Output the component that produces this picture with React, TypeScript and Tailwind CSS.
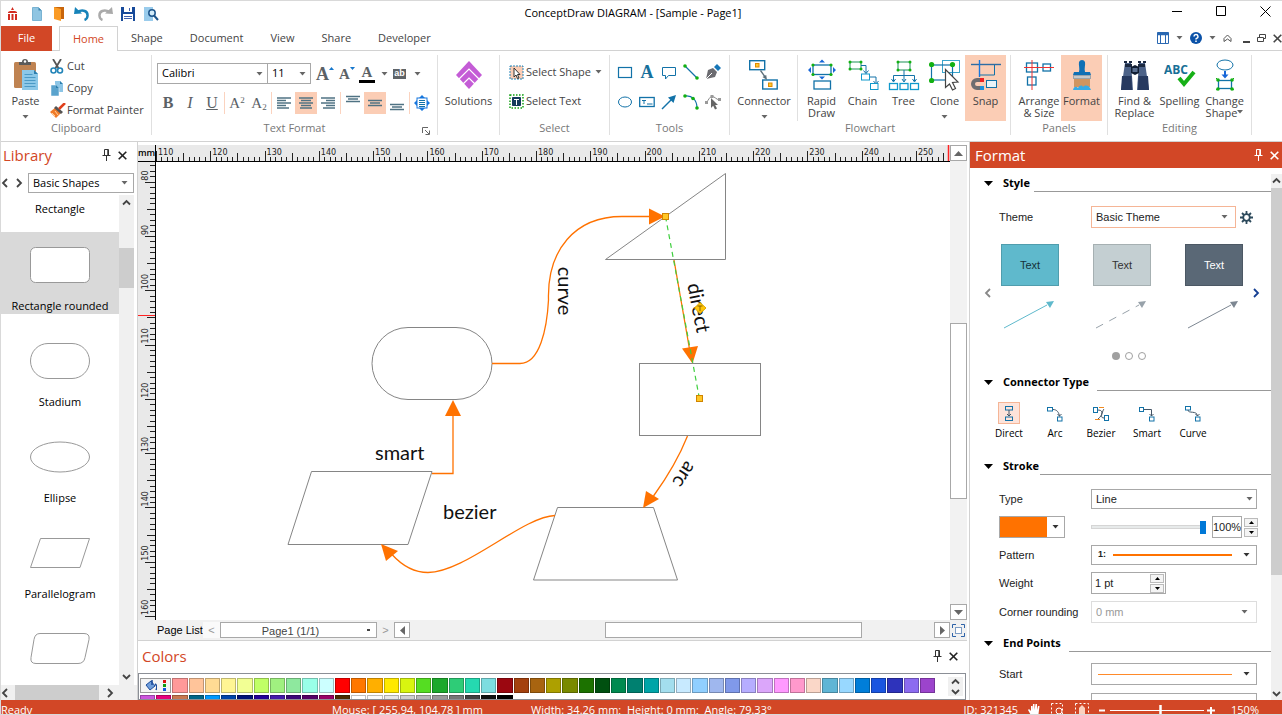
import type { ReactNode } from "react";

const ORANGE = "#ff7200";
const BLUE = "#1272a8";

const TOP_COLORS = [
  "#ff9999", "#ffc49a", "#ffdb94", "#fff594", "#f2ff94", "#c0ff66", "#a0f080", "#8ee89e", "#99ffe8", "#ccffff",
  "#ff0000", "#ff7700", "#ffaf00", "#ffe900", "#d8f510", "#55dd22", "#1ca82c", "#2ecc77", "#25d9b0", "#7ddde0",
  "#9b0710", "#a4410e", "#a86410", "#ada000", "#798a00", "#1c7200", "#005010", "#008a50", "#008070", "#00a5a8",
  "#a3deee", "#c8eaff", "#90cfff", "#9fb7ee", "#8099ea", "#b6adff", "#dba6fa", "#ff99ff", "#ff99cc", "#fad7c8",
  "#5fb5d5", "#98d8ff", "#007ed9", "#1a55e0", "#2e33bb", "#8c6bf0", "#9c44cc",
];

const BOTTOM_COLORS = [
  "#cc55dd", "#e6007e", "#c87850", "#006688", "#0099ff", "#0044aa", "#001177", "#220099", "#441aaa", "#3c0878",
  "#550066", "#990066", "#4a2a00", "#ffffff", "#fafafa", "#e6e6e6", "#cfcfcf", "#b8b8b8", "#999999", "#777777",
  "#404040", "#101010", "#000000",
];

function Caret({ className = "text-[#666]" }: { className?: string }) {
  return (
    <svg viewBox="0 0 7 4" className={`h-1 w-[7px] shrink-0 ${className}`} fill="currentColor">
      <path d="M.500 0h6L3.500 3.500z" />
    </svg>
  );
}

function Chevron({ dir, className = "text-[#444]" }: { dir: "left" | "right" | "up" | "down"; className?: string }) {
  const d = { left: "M6 1 2 5l4 4", right: "M3 1l4 4-4 4", up: "M1 6.500 4.500 3 8 6.500", down: "M1 3l3.500 3.500L8 3" }[dir];
  return (
    <svg viewBox="0 0 9 10" className={`h-[10px] w-[9px] shrink-0 ${className}`} fill="none" stroke="currentColor" strokeWidth="1.800">
      <path d={d} />
    </svg>
  );
}

function Pin() {
  return (
    <svg viewBox="0 0 9 12" className="h-3 w-[9px]" fill="none" stroke="currentColor">
      <path d="M2.500 6.500v-6h4v6M.500 6.500h8M4.500 7v5" />
      <path d="M6 1v5" strokeWidth="1.500" />
    </svg>
  );
}

function Cross() {
  return (
    <svg viewBox="0 0 9 9" className="h-[9px] w-[9px]" stroke="currentColor" strokeWidth="1.600">
      <path d="M.700.700l7.600 7.600M8.300.700.700 8.300" />
    </svg>
  );
}

function Drop({ label, value, className, arrow = "right-2" }: { label: string; value: string; className: string; arrow?: string }) {
  return (
    <div className={`relative flex items-center border bg-white ${className}`}>
      <select aria-label={label} className="h-full w-full appearance-none truncate bg-transparent pl-1 outline-none">
        <option>{value}</option>
      </select>
      <span className={`pointer-events-none absolute ${arrow}`}>
        <Caret />
      </span>
    </div>
  );
}

/* ---------- ribbon ---------- */

function Group({ label, className, children }: { label: string; className: string; children: ReactNode }) {
  return (
    <div className={`flex shrink-0 flex-col border-r border-[#e0e0e0] ${className}`}>
      <div className="flex h-[66px]">{children}</div>
      <div className="mt-px text-center leading-3 text-[#777]">{label}</div>
    </div>
  );
}

function Big({ label, icon, active, caret, width = "w-[41px]" }: { label: ReactNode; icon: ReactNode; active?: boolean; caret?: boolean; width?: string }) {
  return (
    <button className={`flex h-full shrink-0 flex-col items-center ${width} ${active ? "bg-[#fbcdb5]" : ""}`}>
      <span className="flex h-10 items-center">{icon}</span>
      <span className="text-center leading-3 whitespace-pre">{label}</span>
      {caret && (
        <span className="mt-2">
          <Caret />
        </span>
      )}
    </button>
  );
}

function Tool({ name, active, children }: { name: string; active?: boolean; children: ReactNode }) {
  return (
    <button aria-label={name} className={`flex h-[22px] w-[22px] shrink-0 items-center justify-center ${active ? "bg-[#fbcdb5]" : ""}`}>
      {children}
    </button>
  );
}

const ToolSep = () => <span className="mx-px h-[22px] w-px bg-[#fbd3bf]" />;

function Svg({ w, h, children }: { w: number; h: number; children: ReactNode }) {
  return (
    <svg width={w} height={h} viewBox={`0 0 ${w} ${h}`} fill="none" stroke={BLUE}>
      {children}
    </svg>
  );
}

function Lines({ rows }: { rows: [number, number, number][] }) {
  return (
    <svg width="14" height="20" viewBox="0 0 14 20" stroke="#4f7283" strokeWidth="1.500">
      {rows.map(([x1, x2, y]) => (
        <path key={y} d={`M${x1} ${y}H${x2}`} />
      ))}
    </svg>
  );
}

function Dots({ points, r = 1.6 }: { points: [number, number][]; r?: number }) {
  return (
    <g fill="#12b012" stroke="none">
      {points.map(([x, y]) => (
        <circle key={`${x}-${y}`} cx={x} cy={y} r={r} />
      ))}
    </g>
  );
}

const PasteIcon = () => (
  <Svg w={26} h={32}>
    <g stroke="none">
      <rect x="1" y="3" width="22" height="26" rx="1.500" fill="#bf8352" />
      <path d="M6 6V3h3a3 3 0 0 1 6 0h3v3z" fill="#5b5b5b" />
      <circle cx="12" cy="2.500" r="1.200" fill="#fff" />
      <path d="M9 11h12l4 4v16H9z" fill="#8cc8e8" />
      <path d="M21 11v4h4z" fill="#2c7fae" />
    </g>
    <path d="M11.500 15.500h8M11.500 18.500h11M11.500 21.500h11M11.500 24.500h11M11.500 27.500h11" stroke="#4b9ac6" />
  </Svg>
);

const ConnectorIcon = () => (
  <Svg w={30} h={32}>
    <rect x=".700" y="1.700" width="15" height="9" strokeWidth="1.400" />
    <rect x="13.700" y="21" width="14.500" height="9" strokeWidth="1.400" />
    <g fill="#ffc72e" stroke="#e08a00">
      <rect x="6.500" y="4.500" width="3.500" height="3.500" />
      <rect x="19.500" y="24" width="3.500" height="3.500" />
    </g>
    <path d="M11.500 11.500l5 7" stroke="#5c6f7a" strokeWidth="1.300" />
    <path d="M18 21l-4.500-3 3.700-2z" fill="#5c6f7a" stroke="none" />
  </Svg>
);

const RapidIcon = () => (
  <Svg w={28} h={32}>
    <rect x="5" y="6" width="18" height="9.500" strokeWidth="1.300" />
    <rect x="6" y="22" width="16.500" height="8" strokeWidth="1.300" />
    <path d="M14 .500l3 3h-6zM14 20.500l3-3h-6zM0 11l3-3v6zM28 11l-3-3v6z" fill="#1666d8" stroke="none" />
    <Dots points={[[5, 6], [23, 6], [5, 15.5], [23, 15.5]]} />
  </Svg>
);

const ChainIcon = () => (
  <Svg w={32} h={32}>
    <rect x="3" y="3" width="11" height="7" stroke="#1c9158" />
    <path d="M14 6.500h5v8M23 18h6v6" />
    <path d="M16.500 11.500l2.500 3 2.500-3M26.500 22l2.500 3 2.500-3" />
    <rect x="14.500" y="15" width="8" height="6" stroke="#1099cc" />
    <rect x="23.500" y="24.500" width="7.500" height="6" stroke="#1099cc" />
    <Dots points={[[3, 3], [14, 3], [3, 10], [14, 10]]} r={1.5} />
  </Svg>
);

const TreeIcon = () => (
  <Svg w={32} h={32}>
    <rect x="10" y="3" width="12" height="8" stroke="#1c9158" />
    <path d="M16 11v11M5.500 22v-5.500h21V22M3.500 20l2 3 2-3M14 20l2 3 2-3M24.500 20l2 3 2-3" />
    <g stroke="#1099cc" strokeWidth="1.300">
      <rect x="1.500" y="24.500" width="8" height="6" />
      <rect x="12" y="24.500" width="8" height="6" />
      <rect x="22.500" y="24.500" width="8" height="6" />
    </g>
    <Dots points={[[10, 3], [22, 3], [10, 11], [22, 11]]} r={1.5} />
  </Svg>
);

const CloneIcon = () => (
  <Svg w={32} h={32}>
    <rect x="13.500" y="1.500" width="17" height="12" stroke="#3aa5cc" />
    <rect x="2.500" y="6" width="21" height="15" strokeWidth="1.200" />
    <Dots points={[[2.6, 5.5], [23.5, 5.5], [2.6, 21.5]]} r={2.6} />
    <path d="M16.500 10.500v18l4-3.500 3 6 3-1.500-3-6 5.500-.500z" fill="#fff" stroke="#444" strokeWidth="1.200" />
  </Svg>
);

const SnapIcon = () => (
  <Svg w={32} h={32}>
    <path d="M1 5.500h30" stroke="#2d6ca3" strokeWidth="1.400" />
    <path d="M9.500 1v17" stroke="#1677dd" strokeWidth="1.400" />
    <path d="M24.500 6v10H10" />
    <path d="M10 21H7a4 4 0 0 0 0 8h3" stroke="#6d6d70" strokeWidth="4" />
    <path d="M10 19h4v4h-4z" fill="#e22" stroke="none" />
    <path d="M10 27h4v4h-4z" fill="#1a90dd" stroke="none" />
    <rect x="16.500" y="21.500" width="10" height="7" fill="#e8f3f8" />
  </Svg>
);

const ArrangeIcon = () => (
  <Svg w={32} h={32}>
    <rect x="3.500" y="4" width="11" height="9" strokeWidth="1.300" />
    <rect x="20" y="5" width="7.500" height="7" strokeWidth="1.300" />
    <rect x="4.500" y="18" width="8.500" height="8" strokeWidth="1.300" />
    <path d="M1 8.500h30M9 1v30" stroke="#e33" />
  </Svg>
);

const BrushIcon = () => (
  <Svg w={20} h={32}>
    <g stroke="none">
      <path d="M7 3a3.200 3.200 0 0 1 6 0c.600 3-1 6 0 10h5l1 3H1l1-3h5c1-4-.600-7 0-10z" fill="#0f70b5" />
      <path d="M1 16h18v4H1z" fill="#9aa3aa" />
      <path d="M2 17.500h16v1H2z" fill="#eee" />
      <path d="M2 20h16v8H2z" fill="#cf9560" />
      <path d="M1 31c1-4 3-4 5-2 2-3 4-3 5-1 2-2 5-2 7 1l1 2z" fill="#35abe8" />
    </g>
  </Svg>
);

const BinocularsIcon = () => (
  <Svg w={30} h={32}>
    <g stroke="none">
      <path d="M5 4h6l2 27H1z" fill="#4c6288" />
      <path d="M25 4h-6l-2 27h12z" fill="#4c6288" />
      <path d="M2 17h9.500l.500 14H1zM18.500 17H28l1 14H18z" fill="#26395f" />
      <path d="M4 2h3v2H4zM9 2h3v2H9zM18 2h3v2h-3zM23 2h3v2h-3zM5 5h7v3H5zM18 5h7v3h-7z" fill="#1c2940" />
      <path d="M11 8l4-2 4 2v6l-4 2-4-2z" fill="#111e33" />
      <rect x="12.500" y="9" width="5" height="4" fill="#5a6f90" />
    </g>
  </Svg>
);

const SpellingIcon = () => (
  <svg width="32" height="32" viewBox="0 0 32 32">
    <text x="0" y="15" className="font-['Open_Sans',sans-serif] text-[12px] font-bold" fill="#176f96">ABC</text>
    <path d="M15 19l5 6L30 13" fill="none" stroke="#17b017" strokeWidth="4" />
  </svg>
);

const ChangeIcon = () => (
  <Svg w={20} h={32}>
    <ellipse cx="10" cy="6" rx="8" ry="5" />
    <path d="M10 12v4" stroke="#1666d8" strokeWidth="2" />
    <path d="M6.500 15.500h7L10 19.500z" fill="#1666d8" stroke="none" />
    <rect x="3.500" y="21.500" width="13" height="8" strokeWidth="1.300" />
    <path d="M1 19l3 3M19 19l-3 3M1 31l3-2M19 31l-3-2" stroke="#12b012" />
    <Dots points={[[3, 21], [17, 21], [3, 30], [17, 30]]} r={1.8} />
  </Svg>
);

function TitleBar() {
  return (
    <header className="grid h-[25px] shrink-0 grid-cols-3 items-center pr-2 pl-[7px]">
      <div className="flex items-center gap-[9px]">
        <svg width="9" height="14" viewBox="0 0 9 14" fill="#d22b20">
          <path d="M4.500 0 6 3 3 3zM0 5l2-1h5l2 1v1H0zM0 7h2v6H0zM3.500 7h2v6h-2zM7 7h2v6H7z" />
        </svg>
        <button aria-label="New" className="ml-[6px]">
          <Svg w={10} h={14}>
            <path d="M.500.500h6l3 3v10h-9z" fill="#8fc5e2" stroke="#79b3d3" />
            <path d="M6.500.500v3h3z" fill="#3a85b0" stroke="none" />
          </Svg>
        </button>
        <button aria-label="Open" className="ml-[2px]">
          <Svg w={12} h={15}>
            <path d="M1 1h10v12H1z" fill="#c8650b" stroke="none" />
            <path d="M1 1l7 2v12l-7-2z" fill="#fa9b26" stroke="none" />
          </Svg>
        </button>
        <button aria-label="Undo">
          <Svg w={15} h={14}>
            <path d="M3 5c6-3 11-1 10.500 4-.200 2-1.500 3.500-3 4" stroke="#1783b9" strokeWidth="2.500" />
            <path d="M0 7L1 0l7 6.500z" fill="#1783b9" stroke="none" />
          </Svg>
        </button>
        <button aria-label="Redo">
          <Svg w={15} h={14}>
            <path d="M12 5C6 2 1 4 1.500 9c.200 2 1.500 3.500 3 4" stroke="#aaa" strokeWidth="2.500" />
            <path d="M15 7l-1-7-7 6.500z" fill="#aaa" stroke="none" />
          </Svg>
        </button>
        <button aria-label="Save" className="-ml-px">
          <Svg w={14} h={14}>
            <path d="M0 0h14v14H0z" fill="#174a9a" stroke="none" />
            <path d="M3 0h8v5H3zM2 7h10v7H2z" fill="#fff" stroke="none" />
            <path d="M8.500 1v3M3 9.500h8M3 11.500h8" stroke="#3d5fae" />
          </Svg>
        </button>
        <button aria-label="Preview">
          <Svg w={15} h={14}>
            <path d="M0 0h9v14H0z" fill="#9accec" stroke="none" />
            <circle cx="8" cy="6" r="3.200" fill="#d3ecfa" strokeWidth="1.500" stroke="#1e568c" />
            <path d="M10 8.500l4 4.500" stroke="#1e568c" strokeWidth="2" />
          </Svg>
        </button>
      </div>
      <h1 className="pr-4 text-center text-[11px] text-black">ConceptDraw DIAGRAM - [Sample - Page1]</h1>
      <div className="flex items-center justify-end gap-[33px] pr-[3px] pb-1 text-black">
        <button aria-label="Minimize">
          <svg width="11" height="11" stroke="currentColor"><path d="M0 5.500h10" /></svg>
        </button>
        <button aria-label="Maximize">
          <svg width="11" height="11" fill="none" stroke="currentColor"><path d="M.500.500h9v9h-9z" /></svg>
        </button>
        <button aria-label="Close">
          <svg width="11" height="11" stroke="currentColor"><path d="M.500.500l10 10M10.500.500l-10 10" /></svg>
        </button>
      </div>
    </header>
  );
}

function Tabs() {
  return (
    <nav className="flex h-[25px] shrink-0 items-stretch text-[11px] text-[#444]">
      <button className="w-[51px] bg-[#d24726] text-white">File</button>
      <div className="w-[7px] border-b border-[#d2d2d2]" />
      <button className="w-[59px] border-x border-t border-[#d2d2d2] text-[#d24726]">Home</button>
      <div className="flex flex-1 items-center border-b border-[#d2d2d2] pl-[13px]">
        <div className="flex gap-[27px]">
          <button>Shape</button>
          <button>Document</button>
          <button>View</button>
          <button>Share</button>
          <button>Developer</button>
        </div>
        <div className="ml-auto flex items-center gap-[7px]">
          <button aria-label="Layout">
            <Svg w={12} h={12}>
              <path d="M.500.500h11v11H.500z" fill="#fff" stroke="#2a68b2" />
              <path d="M0 2h12" strokeWidth="2.500" stroke="#2a68b2" />
              <path d="M3.500 3v9M8.500 3v9" stroke="#2a68b2" />
            </Svg>
          </button>
          <Caret />
          <button aria-label="Help">
            <svg width="12" height="12" viewBox="0 0 12 12">
              <circle cx="6" cy="6" r="6" fill="#0b52a8" />
              <path d="M4 4.500a2 2 0 1 1 2.500 2C6 6.700 6 7 6 7.500M6 8.500V10" fill="none" stroke="#fff" strokeWidth="1.500" />
            </svg>
          </button>
          <Caret />
          <button aria-label="Collapse ribbon">
            <svg width="9" height="9" fill="none" stroke="#555"><path d="M1 4.500L4.500 1 8 4.500v3L4.500 5 1 7.500z" /></svg>
          </button>
          <button aria-label="Minimize page" className="ml-1">
            <svg width="7" height="9" stroke="#444" strokeWidth="2"><path d="M0 8h7" /></svg>
          </button>
          <button aria-label="Restore page">
            <svg width="9" height="9" fill="none" stroke="#444"><path d="M2.500 3V.500h6v4H6.500M.500 3.500h6v4h-6z" /></svg>
          </button>
          <button aria-label="Close page"><Cross /></button>
        </div>
      </div>
    </nav>
  );
}

function Ribbon() {
  return (
    <div className="flex h-[91px] shrink-0 border-b border-[#d2d2d2] pt-1 pb-[6px] text-[#444]">
      <Group label="Clipboard" className="w-[151px]">
        <div className="w-1" />
        <Big label="Paste" icon={<PasteIcon />} caret />
        <div className="ml-1 flex flex-col text-[11px]">
          <button className="flex h-[22px] items-center gap-[3px]">
            <Svg w={14} h={15}>
              <path d="M3 0l6 10M11 0L5 10" stroke="#555" strokeWidth="1.800" />
              <circle cx="3.500" cy="11.500" r="2.500" strokeWidth="1.600" stroke="#2284b8" />
              <circle cx="10" cy="11.500" r="2.500" strokeWidth="1.600" stroke="#2284b8" />
            </Svg>
            Cut
          </button>
          <button className="flex h-[22px] items-center gap-[3px]">
            <Svg w={14} h={15}>
              <path d="M5 0h5l3 3v8H5z" fill="#8cc5e6" stroke="none" />
              <path d="M1 4h5l3 3v8H1z" fill="#5aa3cd" stroke="#fff" strokeWidth=".500" />
              <path d="M10 0v3h3zM6 4v3h3z" fill="#2c7fae" stroke="none" />
            </Svg>
            Copy
          </button>
          <button className="flex h-[22px] items-center gap-px whitespace-nowrap">
            <Svg w={16} h={15}>
              <path d="M0 9l6-5 6 5-6 6z" fill="#f07a28" stroke="none" />
              <path d="M4 5l2-2 7 6-2 2z" fill="#555" stroke="none" />
              <path d="M9 6l6-6" stroke="#e0401c" strokeWidth="2.500" />
              <path d="M2 10l3 3M5 8l3 4" stroke="#ffd09a" />
            </Svg>
            Format Painter
          </button>
        </div>
      </Group>

      <Group label="Text Format" className="w-[286px]">
        <div className="flex flex-col pt-2 pl-[5px]">
          <div className="flex h-[21px] items-center text-[11px] text-black">
            <Drop label="Font" value="Calibri" className="h-[21px] w-[111px] border-[#a8a8a8]" arrow="right-1" />
            <Drop label="Font size" value="11" className="h-[21px] w-[43px] border-y border-r border-l-0 border-[#a8a8a8]" arrow="right-1" />
            <div className="flex items-center pl-[3px] font-['Liberation_Serif',serif] font-bold text-[#5b6166]">
              <button className="flex w-[22px] items-start justify-center text-[18px] leading-5">
                A<svg width="5" height="3" className="mt-[3px]"><path d="M0 3h5L2.500 0z" fill="#1677cc" /></svg>
              </button>
              <button className="flex w-[22px] items-start justify-center text-[15px] leading-5">
                A<svg width="5" height="3" className="mt-[3px]"><path d="M0 0h5L2.500 3z" fill="#1677cc" /></svg>
              </button>
              <button className="ml-px flex h-[18px] w-4 justify-center border-b-[3px] border-black text-[15px] leading-[15px]">A</button>
              <span className="ml-[6px]"><Caret /></span>
              <button className="ml-[5px] h-[10px] w-[13px] bg-[#5f6468] font-['Liberation_Sans',sans-serif] text-[9px] leading-[9px] text-white">ab</button>
              <span className="ml-2"><Caret /></span>
            </div>
          </div>
          <div className="mt-2 flex font-['Liberation_Serif',serif] text-[16px] leading-none font-bold text-[#5b6166]">
            <Tool name="Bold">B</Tool>
            <Tool name="Italic"><i className="font-normal">I</i></Tool>
            <Tool name="Underline"><span className="font-normal underline">U</span></Tool>
            <ToolSep />
            <Tool name="Superscript"><span className="text-[15px] font-normal">A<sup className="text-[9px]">2</sup></span></Tool>
            <Tool name="Subscript"><span className="text-[15px] font-normal">A<sub className="text-[9px]">2</sub></span></Tool>
            <ToolSep />
            <Tool name="Align left"><Lines rows={[[0, 14, 5], [0, 9, 7.5], [0, 14, 10], [0, 9, 12.5], [0, 12, 15]]} /></Tool>
            <Tool name="Align center" active><Lines rows={[[0, 14, 5], [2, 12, 7.5], [0, 14, 10], [2, 12, 12.5], [1, 13, 15]]} /></Tool>
            <Tool name="Align right"><Lines rows={[[0, 14, 5], [5, 14, 7.5], [0, 14, 10], [5, 14, 12.5], [2, 14, 15]]} /></Tool>
            <ToolSep />
            <Tool name="Align top"><Lines rows={[[0, 14, 3.5], [2, 12, 6], [0, 14, 8.5]]} /></Tool>
            <Tool name="Align middle" active><Lines rows={[[0, 14, 7.5], [2, 12, 10], [0, 14, 12.5]]} /></Tool>
            <Tool name="Align bottom"><Lines rows={[[0, 14, 11.5], [2, 12, 14], [0, 14, 16.5]]} /></Tool>
            <ToolSep />
            <Tool name="Fit text">
              <Svg w={16} h={16}>
                <path d="M8 0l3 3H5zM8 16l3-3H5zM0 8l3-3v6zM16 8l-3-3v6z" fill="#1677dd" stroke="none" />
                <rect x="3" y="3" width="10" height="10" fill="#fff" stroke="#1677dd" />
                <path d="M5 5.500h6M5 7.500h6M5 9.500h6M5 11.500h6" />
              </Svg>
            </Tool>
          </div>
          <button aria-label="Text format options" className="mt-[13px] mr-[3px] self-end">
            <svg width="8" height="8" fill="none" stroke="#666"><path d="M.500 6V.500H6M3 3l4 4M7.500 3.500v4h-4" /></svg>
          </button>
        </div>
      </Group>

      <Group label="" className="w-[62px]">
        <Big label="Solutions" width="w-full" icon={
          <Svg w={26} h={28}>
            <path d="M13 0l13 14-13 14L0 14z" fill="#c45cd6" stroke="none" />
            <path d="M2 19l11-11 11 11M5 25l8-8 8 8" stroke="#fff" strokeWidth="1.200" />
          </Svg>
        } />
      </Group>

      <Group label="Select" className="w-[110px]">
        <div className="flex w-full flex-col gap-[7px] pt-[6px] pl-[9px] text-[11px]">
          <button className="flex h-[22px] items-center gap-[2px] whitespace-nowrap">
            <Svg w={15} h={15}>
              <path d="M1 1h13v13H1z" fill="#fbcdb5" strokeDasharray="2 1" stroke="#2284b8" />
              <path d="M5 3v9l2-2 1.500 3.500L10 13l-1.500-3.500H11z" fill="#fff" stroke="#333" />
            </Svg>
            Select Shape
            <span className="ml-[2px]"><Caret /></span>
          </button>
          <button className="flex h-[22px] items-center gap-[2px]">
            <Svg w={15} h={15}>
              <path d="M1 1h13v13H1z" strokeDasharray="1.500 1.500" stroke="#12a012" strokeWidth="1.500" />
              <path d="M3.500 3.500h8v8h-8z" fill="#143a5c" stroke="#143a5c" />
              <path d="M5 5.500h5M7.500 5v6" stroke="#fff" />
            </Svg>
            Select Text
          </button>
        </div>
      </Group>

      <Group label="Tools" className="w-[120px]">
        <div className="grid grid-cols-5 content-start gap-y-2 pt-[6px] pl-1">
          <Tool name="Rectangle"><Svg w={16} h={16}><rect x="1.500" y="3.500" width="13" height="10" strokeWidth="1.200" /></Svg></Tool>
          <Tool name="Text"><span className="font-['Liberation_Serif',serif] text-[18px] leading-none font-bold text-[#17709c]">A</span></Tool>
          <Tool name="Callout"><Svg w={16} h={16}><path d="M1.500 3.500h13v8h-7l-3 3.500v-3.500h-3z" /></Svg></Tool>
          <Tool name="Line"><Svg w={16} h={16}><path d="M2 2l12 12" strokeWidth="1.200" /><Dots points={[[2, 2], [14, 14]]} r={1.8} /></Svg></Tool>
          <Tool name="Pen">
            <Svg w={16} h={16}>
              <path d="M1 15l2-9 5-2 4 4-2 5z" fill="#6b6b70" stroke="none" />
              <path d="M9 3l3-3 4 4-3 3z" fill="#1677b8" stroke="none" />
              <path d="M1 15l6-6" stroke="#fff" />
            </Svg>
          </Tool>
          <Tool name="Ellipse"><Svg w={16} h={16}><ellipse cx="8" cy="8" rx="6.500" ry="5" /></Svg></Tool>
          <Tool name="Text box">
            <Svg w={16} h={16}><rect x=".700" y="3.500" width="14.500" height="9" strokeWidth="1.300" /><path d="M3 6.500h4M5 6v4M8 10h5.500" /></Svg>
          </Tool>
          <Tool name="Arrow"><Svg w={16} h={16}><path d="M1 15L11 5" strokeWidth="1.400" /><path d="M15 1l-2.500 8L7 3.500z" fill={BLUE} stroke="none" /></Svg></Tool>
          <Tool name="Arc"><Svg w={16} h={16}><path d="M2 2c7-1 12 4 12 12" strokeWidth="1.200" /><Dots points={[[2, 2], [10, 4.500], [14, 14]]} r={1.8} /></Svg></Tool>
          <Tool name="Edit points">
            <Svg w={16} h={16}>
              <path d="M1.500 8C4 6 4 3 7 2.500c3 0 4 3 7.500 3.500" stroke="#888" />
              <path d="M0 7h3v3H0zM5.500 1h3v3h-3zM13 4h3v3h-3z" fill="#999" stroke="none" />
              <path d="M6 4v10l2.200-2.200L10 15.500l2-1-1.800-3.500H13z" fill="#666" stroke="none" />
            </Svg>
          </Tool>
        </div>
      </Group>

      <Group label="Flowchart" className="w-[281px]">
        <div className="w-px" />
        <Big label="Connector" icon={<ConnectorIcon />} caret width="w-[66px]" />
        <div className="mr-[3px] w-px bg-[#e0e0e0]" />
        <Big label={"Rapid\nDraw"} icon={<RapidIcon />} />
        <Big label="Chain" icon={<ChainIcon />} />
        <Big label="Tree" icon={<TreeIcon />} />
        <Big label="Clone" icon={<CloneIcon />} caret />
        <Big label="Snap" icon={<SnapIcon />} active />
      </Group>

      <Group label="Panels" className="w-[97px]">
        <div className="w-[6px]" />
        <Big label={"Arrange\n& Size"} icon={<ArrangeIcon />} width="w-[44px]" />
        <Big label="Format" icon={<BrushIcon />} active />
      </Group>

      <Group label="Editing" className="w-[144px]">
        <div className="w-1" />
        <Big label={"Find &\nReplace"} icon={<BinocularsIcon />} width="w-[45px]" />
        <Big label="Spelling" icon={<SpellingIcon />} width="w-[45px]" />
        <Big
          label={<>Change{"\n"}Shape<svg width="6" height="4" className="mb-1 inline" fill="#666"><path d="M0 0h6L3 3.500z" /></svg></>}
          icon={<ChangeIcon />}
          width="w-[45px]"
        />
      </Group>
    </div>
  );
}

/* ---------- library ---------- */

function LibraryItem({ name, selected, children }: { name: string; selected?: boolean; children: ReactNode }) {
  return (
    <button className={`flex h-[82px] w-full shrink-0 flex-col items-center justify-end ${selected ? "bg-[#d9d9d9]" : ""}`}>
      <svg width="62" height="40" viewBox="0 0 62 40" fill="#fff" stroke="#999">
        {children}
      </svg>
      <span className="mt-3 h-[17px] leading-[17px] whitespace-nowrap">{name}</span>
    </button>
  );
}

function Library() {
  return (
    <aside className="flex w-[137px] shrink-0 flex-col border-r border-[#d2d2d2] text-[11px] text-black">
      <div className="flex h-[26px] shrink-0 items-center pr-[10px] pl-[2px]">
        <h2 className="text-[15px] text-[#d24726]">Library</h2>
        <button aria-label="Pin library" className="ml-auto text-[#333]"><Pin /></button>
        <button aria-label="Close library" className="ml-[7px] text-[#222]"><Cross /></button>
      </div>
      <div className="mt-[5px] flex h-5 shrink-0 items-center pr-[3px]">
        <button aria-label="Previous library"><Chevron dir="left" /></button>
        <button aria-label="Next library" className="ml-1"><Chevron dir="right" /></button>
        <Drop label="Library set" value="Basic Shapes" className="ml-[5px] h-5 flex-1 border-[#a8a8a8]" arrow="right-[5px]" />
      </div>
      <div className="mt-[2px] flex min-h-0 flex-1">
        <div className="flex flex-1 flex-col gap-[14px] overflow-hidden">
          <button className="flex h-[23px] shrink-0 items-center justify-center pt-[6px]">Rectangle</button>
          <LibraryItem name="Rectangle rounded" selected><rect x="1.500" y="2.500" width="59" height="35" rx="5" /></LibraryItem>
          <LibraryItem name="Stadium"><rect x="1.500" y="2.500" width="59" height="35" rx="17.500" /></LibraryItem>
          <LibraryItem name="Ellipse"><ellipse cx="31" cy="20" rx="29.500" ry="15" /></LibraryItem>
          <LibraryItem name="Parallelogram"><path d="M11.500 5.500h49l-9.500 29H1.500z" /></LibraryItem>
          <LibraryItem name="">
            <path d="M11 4.500h44q6 0 5 6l-4 18q-1 6-7 6H7q-6 0-5-6l3-18q1-6 6-6z" />
          </LibraryItem>
        </div>
        <div className="mr-[3px] flex w-[15px] flex-col items-center bg-[#f0f0f0]">
          <button aria-label="Scroll up" className="h-4"><Chevron dir="up" /></button>
          <div className="mt-[37px] h-10 w-full bg-[#cdcdcd]" />
          <button aria-label="Scroll down" className="mt-auto h-4"><Chevron dir="down" /></button>
        </div>
      </div>
      <div className="flex h-[15px] shrink-0 items-center bg-[#f0f0f0]">
        <button aria-label="Scroll left" className="w-[14px]"><Chevron dir="left" /></button>
        <div className="h-full w-[84px] bg-[#cdcdcd]" />
        <button aria-label="Scroll right" className="ml-[6px]"><Chevron dir="right" /></button>
      </div>
    </aside>
  );
}

/* ---------- page with rulers ---------- */

const MM = 5.428;

function TopRuler() {
  const marks = Array.from({ length: 147 }, (_, i) => i);
  return (
    <svg className="h-4 w-full" stroke="#222">
      {marks.map((i) => (
        <path key={i} d={`M${Math.round(i * MM)}.500 ${i % 10 === 0 ? 6 : i % 5 === 0 ? 8 : 12}V16`} />
      ))}
      <path d="M792.500 0v16" stroke="#f22" strokeWidth="1.500" />
      <g stroke="none" fill="#222" className="font-['DejaVu_Sans',sans-serif] text-[8px]">
        {marks.filter((i) => i % 10 === 0).map((i) => (
          <text key={i} x={i * MM + 2} y="10">{110 + i}</text>
        ))}
      </g>
    </svg>
  );
}

function SideRuler() {
  const marks = Array.from({ length: 85 }, (_, i) => i);
  return (
    <svg className="h-full w-[17px]" stroke="#222">
      {marks.map((i) => (
        <path key={i} d={`M${(i + 6) % 10 === 0 ? 7 : (i + 6) % 5 === 0 ? 9 : 12} ${Math.round(i * MM - 2)}.500H17`} />
      ))}
      <path d="M0 153.500h17" stroke="#f22" />
      <g stroke="none" fill="#222" className="font-['DejaVu_Sans',sans-serif] text-[8px]">
        {marks.filter((i) => (i + 6) % 10 === 0).map((i) => (
          <text key={i} transform={`translate(10 ${i * MM - 3}) rotate(-90)`}>{76 + i}</text>
        ))}
      </g>
    </svg>
  );
}

function Drawing() {
  return (
    <svg width="795" height="458" viewBox="156 162 795 458" fill="none" className="block">
      <g stroke="#858585">
        <path d="M605.500 259.500L725.500 173.500v86z" />
        <rect x="639.500" y="363.500" width="121" height="72" />
        <rect x="372" y="327.500" width="120" height="72" rx="36" />
        <path d="M311.500 471.500h120.500L408 544.500H288zM557.500 507.500h96l24 72.500H533.500z" />
      </g>
      <g stroke={ORANGE} strokeWidth="1.300">
        <path d="M492 363.500h28C540 363.500 547 328 548.500 300 547 250 575 216.500 622 216.500h30" />
        <path d="M432 473.500h21V412M555 515.500c-32 1-90 57-127 57-14 0-26-7-36-18M687.500 436c-8 20-18 38-34 60M674 260l16 92" />
      </g>
      <g fill={ORANGE}>
        <path d="M665 216.500l-16-8v16z" />
        <path d="M453 400l-8 16h16z" />
        <path d="M381 544l5 17 12-10z" />
        <path d="M643 508l3-17 13 8z" />
        <path d="M692.500 363.500l-10.500-15 16-2.500z" />
      </g>
      <path d="M665.500 216.500L699.500 399" stroke="#3fcf3f" strokeWidth="1.200" strokeDasharray="5 4" />
      <g fill="#111" className="font-['Lato',sans-serif] text-[20px]">
        <text x="375" y="460">smart</text>
        <text x="443" y="519">bezier</text>
        <text textAnchor="middle" transform="translate(558 291) rotate(90)">curve</text>
        <text textAnchor="middle" transform="translate(692 309) rotate(79)">direct</text>
        <text textAnchor="middle" transform="translate(679 471) rotate(124)">arc</text>
      </g>
      <g fill="#ffc726" stroke="#d08400">
        <rect x="662.500" y="213.500" width="6" height="6" />
        <rect x="696.500" y="395.500" width="6" height="6" />
      </g>
      <path d="M700 302.500l6 5.500-6 5.500-5.500-5.500z" fill="#ffc60a" stroke="#e0a800" />
      <path d="M697.500 306h5M700 306v5" stroke="#8a6500" />
    </svg>
  );
}

function PageView() {
  return (
    <div className="flex min-h-0 flex-1 pt-[3px]">
      <div className="flex min-w-0 flex-1 flex-col">
        <div className="flex h-[17px] shrink-0 border-b border-black bg-[#e9e9e9]">
          <div className="flex w-[18px] shrink-0 items-center justify-center border-r border-black text-[9px] font-semibold text-black">mm</div>
          <TopRuler />
        </div>
        <div className="flex min-h-0 flex-1">
          <div className="w-[18px] shrink-0 overflow-hidden border-r border-black bg-[#e9e9e9]"><SideRuler /></div>
          <div className="min-w-0 flex-1 overflow-hidden bg-white"><Drawing /></div>
        </div>
      </div>
      <div className="flex w-[17px] flex-col bg-[#f2f2f2]">
        <button aria-label="Page up" className="flex h-4 items-center justify-center border border-[#a8a8a8] bg-white">
          <svg width="9" height="5" fill="#666"><path d="M0 5h9L4.500 0z" /></svg>
        </button>
        <div className="mt-[162px] h-[176px] border border-[#a8a8a8] bg-white" />
        <button aria-label="Page down" className="mt-auto flex h-4 items-center justify-center border border-[#a8a8a8] bg-white">
          <svg width="9" height="5" fill="#666"><path d="M0 0h9L4.500 5z" /></svg>
        </button>
      </div>
    </div>
  );
}

function PageList() {
  return (
    <div className="flex h-[21px] shrink-0 items-center border-b border-[#d2d2d2] bg-[#f1f1f1] pr-[2px] pl-[19px] font-['Liberation_Sans',sans-serif] text-[11px] text-black">
      <span className="w-[46px] whitespace-nowrap">Page List</span>
      <button className="h-4 w-[17px] bg-[#fafafa] text-[#999]">&lt;</button>
      <div className="relative flex h-4 w-[157px] items-center border border-[#a8a8a8] bg-white">
        <select aria-label="Page" className="h-full w-full appearance-none bg-transparent pr-4 text-center text-[#444]">
          <option>Page1 (1/1)</option>
        </select>
        <span className="pointer-events-none absolute right-[6px] h-[2px] w-[3px] bg-[#444]" />
      </div>
      <button className="h-4 w-[17px] text-[#999]">&gt;</button>
      <button aria-label="Scroll left" className="flex h-4 w-4 items-center justify-center border border-[#a8a8a8] bg-white">
        <svg width="5" height="9" fill="#666"><path d="M5 0v9L0 4.500z" /></svg>
      </button>
      <div className="flex flex-1 justify-end">
        <div className="mr-[72px] h-4 w-[257px] border border-[#a8a8a8] bg-white" />
      </div>
      <button aria-label="Scroll right" className="flex h-4 w-4 items-center justify-center border border-[#a8a8a8] bg-white">
        <svg width="5" height="9" fill="#666"><path d="M0 0v9l5-4.500z" /></svg>
      </button>
      <button aria-label="Fit page" className="ml-[2px]">
        <svg width="13" height="13" fill="none" stroke="#2d62a8">
          <path d="M.500 4V.500H4M9 .500h3.500V4M12.500 9v3.500H9M4 12.500H.500V9" />
          <rect x="3.500" y="3.500" width="6" height="6" fill="#fff" stroke="#7d9cc4" />
        </svg>
      </button>
    </div>
  );
}

function Swatch({ color }: { color: string }) {
  return <button aria-label={color} className="border border-black/25" style={{ backgroundColor: color }} />;
}

function Colors() {
  return (
    <section className="flex h-[59px] shrink-0 flex-col pr-px">
      <div className="flex h-8 shrink-0 items-center pr-2 pb-[2px] pl-1 text-black">
        <h2 className="text-[15px] text-[#d24726]">Colors</h2>
        <button aria-label="Pin colors" className="ml-auto text-[#333]"><Pin /></button>
        <button aria-label="Close colors" className="ml-[7px] text-[#222]"><Cross /></button>
      </div>
      <div className="flex min-h-0 flex-1 border border-[#8b8f96] pr-[2px] pl-px">
        <div className="grid flex-1 grid-cols-[repeat(49,minmax(0,1fr))] grid-rows-[15px_15px] gap-x-px gap-y-[2px] overflow-hidden pt-1">
          <button aria-label="Fill target" className="col-span-2 flex items-center justify-center gap-[6px] border border-[#999] bg-[#f4f4f4]">
            <svg width="12" height="11" viewBox="0 0 12 11">
              <path d="M1 5l5-4 4 5-5 4z" fill="#6f9edb" stroke="#1c4c9c" />
              <path d="M7 0v5M10 4c2 1 2 4 1 6" fill="none" stroke="#1c4c9c" strokeWidth="1.500" />
            </svg>
            <svg width="3" height="11">
              <path d="M0 0h3v3H0z" fill="#d11" /><path d="M0 4h3v3H0z" fill="#191" /><path d="M0 8h3v3H0z" fill="#15d" />
            </svg>
          </button>
          {TOP_COLORS.map((c) => <Swatch key={c} color={c} />)}
          {BOTTOM_COLORS.map((c) => <Swatch key={c} color={c} />)}
        </div>
        <div className="my-[3px] ml-[13px] flex w-[15px] flex-col items-center justify-between bg-[#f0f0f0]">
          <button aria-label="Previous colors" className="h-[10px]"><Chevron dir="up" /></button>
          <button aria-label="Next colors" className="h-[10px]"><Chevron dir="down" /></button>
        </div>
      </div>
    </section>
  );
}

/* ---------- format panel ---------- */

function Heading({ children, gap = "ml-1" }: { children: ReactNode; gap?: string }) {
  return (
    <h3 className="flex h-[18px] shrink-0 items-center font-['Open_Sans',sans-serif] text-[11px] font-bold text-black">
      <button className="flex h-full items-center gap-[10px] whitespace-nowrap">
        <svg width="9" height="5"><path d="M0 0h9L4.500 5z" /></svg>
        {children}
      </button>
      <span className={`h-[17px] flex-1 border-b border-[#999] ${gap}`} />
    </h3>
  );
}

function Row({ label, children }: { label: string; children: ReactNode }) {
  return (
    <div className="flex min-h-5 items-center pr-[14px] pl-[15px]">
      <span className="w-[92px] shrink-0 whitespace-nowrap">{label}</span>
      {children}
    </div>
  );
}

function ThemeCard({ bg, line, dash }: { bg: string; line: string; dash?: string }) {
  return (
    <button className="flex w-[58px] flex-col items-center text-[11px]">
      <span className={`flex h-[42px] w-full items-center justify-center border border-black/15 ${bg}`}>Text</span>
      <svg width="58" height="44" stroke={line} fill={line}>
        <path d="M3 42L46 19" strokeDasharray={dash} />
        <path d="M53 15l-8 1 4 6z" stroke="none" />
      </svg>
    </button>
  );
}

const CONNECTORS: { name: string; art: ReactNode }[] = [
  { name: "Direct", art: <><rect x="4.500" y="1.500" width="7" height="3.500" /><rect x="4.500" y="12" width="7" height="3.500" /><path d="M8 5v6M6 9l2 2 2-2" stroke="#456" /></> },
  { name: "Arc", art: <><rect x=".500" y="2.500" width="5" height="3.500" /><rect x="10.500" y="12" width="4.500" height="4" /><path d="M6 4.500c4 0 6 3 6.500 7M10.500 9l2 2 2-2" stroke="#456" /></> },
  { name: "Bezier", art: <><rect x=".500" y="2.500" width="4" height="5" /><rect x="11.500" y="10.500" width="4" height="5" /><path d="M5 5c8 0 0 8 6 8M5 14c5-4 4-8 6-10" stroke="#456" /><path d="M6 2.500h5M2 14.500h5" stroke="#f08a20" /></> },
  { name: "Smart", art: <><rect x=".500" y="2.500" width="4" height="4" /><rect x="10.500" y="12" width="4.500" height="4" /><path d="M5 4.500h7.500V11M10.500 9l2 2 2-2" stroke="#456" /></> },
  { name: "Curve", art: <><rect x=".500" y="1.500" width="5" height="3.500" /><rect x="10.500" y="12" width="4.500" height="4" /><path d="M3 5c0 4 9 0 9.500 6M10.500 9l2 2 2-2" stroke="#456" /></> },
];

function Stepper() {
  return (
    <span className="flex w-[14px] shrink-0 flex-col gap-px">
      {["M0 3h5L2.500 0z", "M0 0h5L2.500 3z"].map((d, i) => (
        <button key={d} aria-label={i ? "Decrease" : "Increase"} className="flex h-[9px] items-center justify-center border border-[#bbb] bg-[#f4f4f4]">
          <svg width="5" height="3"><path d={d} /></svg>
        </button>
      ))}
    </span>
  );
}

function LineDrop({ label, prefix }: { label: string; prefix?: string }) {
  return (
    <button aria-label={label} className="flex h-full min-h-5 flex-1 items-center gap-[7px] border border-[#a8a8a8] bg-white px-[6px]">
      {prefix && <b className="text-[9px]">{prefix}</b>}
      <span className={`flex-1 ${prefix ? "h-[2px] bg-[#ff7200]" : "h-px bg-[#ff8a2a]"}`} />
      <span className="ml-1"><Caret className="text-[#333]" /></span>
    </button>
  );
}

function FormatPanel() {
  return (
    <aside className="flex w-[312px] shrink-0 flex-col font-['Liberation_Sans',sans-serif] text-[11px] text-[#222]">
      <div className="flex h-[26px] shrink-0 items-center bg-[#d24726] pr-[3px] pl-[5px] font-['Open_Sans',sans-serif] text-white">
        <h2 className="text-[15px]">Format</h2>
        <button aria-label="Pin format" className="ml-auto"><Pin /></button>
        <button aria-label="Close format" className="ml-[7px]"><Cross /></button>
      </div>
      <div className="flex min-h-0 flex-1 pt-[6px] pl-[14px]">
        <div className="flex min-w-0 flex-1 flex-col overflow-hidden">
          <Heading>Style</Heading>
          <div className="mt-[14px] flex h-[22px] shrink-0 items-center pl-[15px]">
            <span className="w-[92px]">Theme</span>
            <Drop label="Theme" value="Basic Theme" className="h-[22px] w-[145px] border-[#f5b596]" arrow="right-[7px]" />
            <button aria-label="Theme settings" className="ml-1">
              <svg width="13" height="13" viewBox="0 0 13 13" fill="none" stroke="#2d4a5c">
                <circle cx="6.500" cy="6.500" r="3.300" strokeWidth="1.800" />
                <path d="M6.500 0v3M6.500 10v3M0 6.500h3M10 6.500h3M2 2l2 2M9 9l2 2M11 2L9 4M4 9l-2 2" strokeWidth="1.800" />
              </svg>
            </button>
          </div>
          <div className="mt-4 flex h-[86px] shrink-0 items-center">
            <button aria-label="Previous themes" className="mt-3"><Chevron dir="left" className="text-[#888]" /></button>
            <div className="ml-2 flex gap-[34px]">
              <ThemeCard bg="bg-[#5fb9cc] text-[#16323a]" line="#5fb9cc" />
              <ThemeCard bg="bg-[#c4cfd2] text-[#333]" line="#98a2aa" dash="8 7" />
              <ThemeCard bg="bg-[#5a6876] text-white" line="#7d8792" />
            </div>
            <button aria-label="Next themes" className="mt-3 ml-2"><Chevron dir="right" className="text-[#153f93]" /></button>
          </div>
          <div className="mt-[22px] ml-[128px] flex h-2 shrink-0 gap-[5px]">
            <button aria-label="Themes 1" className="h-2 w-2 rounded-full bg-[#a0a0a0]" />
            <button aria-label="Themes 2" className="h-2 w-2 rounded-full border border-[#a0a0a0]" />
            <button aria-label="Themes 3" className="h-2 w-2 rounded-full border border-[#a0a0a0]" />
          </div>

          <div className="mt-[13px]"><Heading gap="ml-2">Connector Type</Heading></div>
          <div className="mt-[11px] flex h-[38px] shrink-0 pl-[2px] font-['Open_Sans',sans-serif] text-[10px] text-black">
            {CONNECTORS.map((c, i) => (
              <button key={c.name} className="flex w-[46px] flex-col items-center gap-[3px] leading-[13px]">
                <span className={`flex h-[22px] w-[22px] items-center justify-center border ${i === 0 ? "border-[#f5b596] bg-[#fde3da]" : "border-transparent"}`}>
                  <svg width="16" height="17" fill="none" stroke={BLUE}>{c.art}</svg>
                </span>
                {c.name}
              </button>
            ))}
          </div>

          <div className="mt-[17px]"><Heading gap="ml-px">Stroke</Heading></div>
          <div className="mt-[14px] flex shrink-0 flex-col gap-[7px]">
            <Row label="Type">
              <Drop label="Type" value="Line" className="h-5 flex-1 border-[#a8a8a8]" arrow="right-[3px]" />
            </Row>
            <div className="flex h-[22px] items-center pr-[13px] pl-[15px]">
              <button aria-label="Stroke color" className="flex h-[22px] w-[66px] items-center border border-[#a8a8a8]">
                <span className="h-full w-[47px] bg-[#ff7200]" />
                <span className="ml-[5px]"><Caret className="text-[#333]" /></span>
              </button>
              <div className="relative ml-[26px] flex h-4 flex-1 items-center">
                <span className="h-1 w-full border border-[#d5d5d5] bg-[#e7eaea]" />
                <input type="range" aria-label="Opacity" defaultValue="100" className="absolute inset-0 w-full opacity-0" />
                <span className="pointer-events-none absolute right-0 h-[13px] w-[6px] bg-[#0078d7]" />
              </div>
              <input aria-label="Opacity percent" defaultValue="100%" className="mr-[2px] ml-[6px] h-[22px] w-[30px] border border-[#a8a8a8] text-[11px]" />
              <Stepper />
            </div>
            <Row label="Pattern"><LineDrop label="Pattern" prefix="1:" /></Row>
            <Row label="Weight">
              <span className="flex h-[22px] w-[75px] items-center border border-[#a8a8a8] pr-px">
                <input aria-label="Weight" defaultValue="1 pt" className="w-full min-w-0 pl-[3px]" />
                <Stepper />
              </span>
            </Row>
            <Row label="Corner rounding">
              <Drop label="Corner rounding" value="0 mm" className="h-[22px] flex-1 border-[#ddd] text-[#999]" arrow="right-2" />
            </Row>
          </div>

          <div className="mt-[11px]"><Heading gap="ml-2">End Points</Heading></div>
          <div className="mt-[11px] flex shrink-0 flex-col gap-2">
            <div className="h-[22px] *:h-full"><Row label="Start"><LineDrop label="Start" /></Row></div>
            <div className="h-[22px] *:h-full"><Row label="End"><LineDrop label="End" /></Row></div>
          </div>
        </div>
        <div className="flex w-[11px] shrink-0 flex-col items-center overflow-hidden bg-[#f0f0f0]">
          <button aria-label="Scroll panel up" className="h-[14px]"><Chevron dir="up" /></button>
          <div className="h-[387px] w-full bg-[#cdcdcd]" />
          <button aria-label="Scroll panel down" className="mt-auto h-3"><Chevron dir="down" /></button>
        </div>
      </div>
    </aside>
  );
}

function StatusBar() {
  return (
    <footer className="flex h-[14px] shrink-0 items-start overflow-hidden bg-[#d24726] text-[11px] leading-5 text-white">
      <span className="w-[331px]">Ready</span>
      <span className="w-[199px]">Mouse: [ 255.94, 104.78 ] mm</span>
      <span className="flex-1 whitespace-pre">Width: 34.26 mm;  Height: 0 mm;  Angle: 79.33°</span>
      <div className="flex items-start gap-[10px] pr-[23px]">
        <span>ID: 321345</span>
        <svg width="13" height="14" viewBox="0 0 13 14" className="mt-[3px]" fill="#fff">
          <path d="M0 7l1-1 2 2V3h1.500v4L5 1h1.500v6L7.500 1H9v6l1-4h1.500l-1 8v3H4z" />
        </svg>
        <svg width="14" height="14" className="mt-[3px]" fill="none" stroke="#fff">
          <path d="M.500.500h11v12H.500z" strokeDasharray="2 2" /><circle cx="8" cy="8" r="3" />
        </svg>
        <svg width="14" height="14" className="mt-[3px]" fill="#fbd0be" stroke="#fff">
          <path d="M.500.500h13v12H.500z" strokeDasharray="2 2" fill="none" /><path d="M4 5l3-3 3 3v9H4z" stroke="none" />
        </svg>
        <svg width="122" height="14" className="mt-[3px]" stroke="#fff">
          <path d="M0 7.500h6M108 7.500h8M112 4v8" strokeWidth="2" />
          <path d="M11 7.500h94" />
          <path d="M61.500 2v12" strokeWidth="2.500" />
        </svg>
        <span>150%</span>
      </div>
    </footer>
  );
}

export default function App() {
  return (
    <div className="flex h-screen flex-col overflow-hidden border-y border-l border-[#d9d9d9] bg-white font-['Open_Sans',sans-serif] text-[11px] text-[#333]">
      <TitleBar />
      <Tabs />
      <Ribbon />
      <main className="flex min-h-0 flex-1">
        <Library />
        <div className="flex min-w-0 flex-1 flex-col">
          <PageView />
          <PageList />
          <Colors />
        </div>
        <div className="w-[3px] shrink-0 border-r border-[#d2d2d2]" />
        <FormatPanel />
      </main>
      <StatusBar />
    </div>
  );
}
